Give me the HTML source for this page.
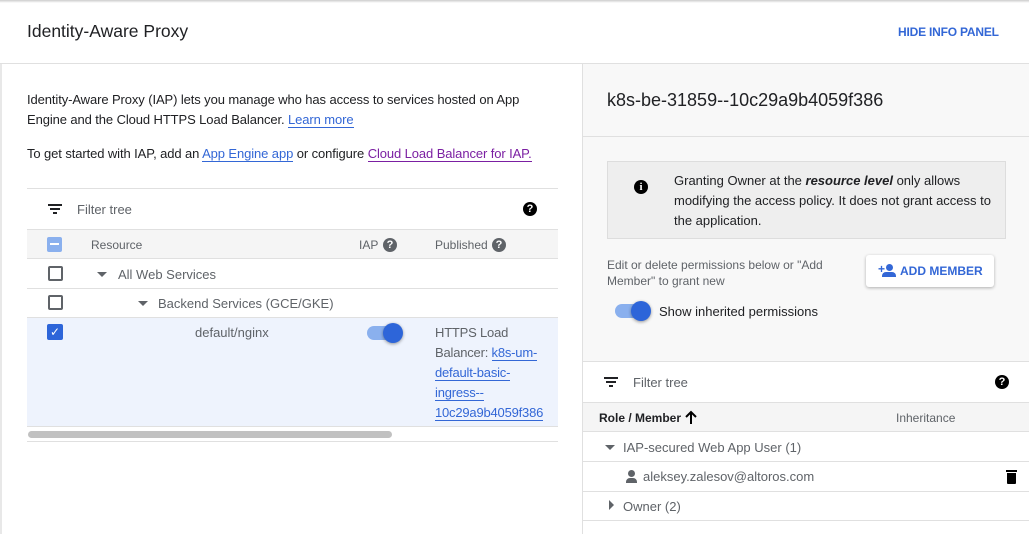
<!DOCTYPE html><html><head><style>
*{box-sizing:border-box;margin:0;padding:0}
body{width:1029px;height:534px;overflow:hidden;font-family:"Liberation Sans",sans-serif;background:#fff;color:#202124;position:relative;font-size:13px}
.a{position:absolute}
a{color:#3367d6;text-decoration:none;border-bottom:1px solid #3367d6}
.line{position:absolute;height:1px;background:#e0e0e0}
.cb{position:absolute;width:15px;height:15px;border:2px solid #5f6368;border-radius:2px}
.tri{position:absolute;width:0;height:0;border-left:5px solid transparent;border-right:5px solid transparent;border-top:5px solid #5f6368}
.q{position:absolute;width:14px;height:14px;border-radius:50%;background:#000;color:#fff;font-size:11px;font-weight:bold;text-align:center;line-height:14px}
.g{color:#5f6368}
</style></head><body>
<div class="a" style="left:0;top:0;width:1029px;height:3px;background:linear-gradient(#ccc,#fff)"></div>
<div class="a" style="left:27px;top:21px;font-size:17.5px">Identity-Aware Proxy</div>
<div class="a" style="left:898px;top:25px;font-size:12px;color:#3367d6;font-weight:bold;letter-spacing:-0.2px">HIDE INFO PANEL</div>
<div class="line" style="left:0;top:63px;width:1029px"></div>
<div class="a" style="left:0;top:64px;width:2px;height:470px;background:#e8e8e8"></div>
<div class="a" style="left:27px;top:90px;line-height:19.5px;width:520px;letter-spacing:-0.1px">Identity-Aware Proxy (IAP) lets you manage who has access to services hosted on App Engine and the Cloud HTTPS Load Balancer. <a>Learn more</a></div>
<div class="a" style="left:27px;top:146px;letter-spacing:-0.1px">To get started with IAP, add an <a>App Engine app</a> or configure <a style="color:#7b1fa2;border-color:#7b1fa2">Cloud Load Balancer for IAP.</a></div>
<div class="line" style="left:27px;top:188px;width:531px"></div>
<div class="a" style="left:48px;top:204px;width:14px;height:2px;background:#202124"></div>
<div class="a" style="left:50px;top:208px;width:10px;height:2px;background:#202124"></div>
<div class="a" style="left:53px;top:212px;width:4px;height:2px;background:#202124"></div>
<div class="a g" style="left:77px;top:202px">Filter tree</div>
<div class="q" style="left:523px;top:202px">?</div>
<div class="a" style="left:27px;top:229px;width:531px;height:30px;background:#f5f5f5;border-top:1px solid #e0e0e0;border-bottom:1px solid #e0e0e0"></div>
<div class="a" style="left:47px;top:237px;width:15px;height:15px;background:#8ab0ee;border-radius:2px"><div style="margin:6px 3px;height:2px;background:#fff"></div></div>
<div class="a g" style="left:91px;top:238px;font-size:12px">Resource</div>
<div class="a g" style="left:359px;top:238px;font-size:12px">IAP</div><div class="q" style="left:383px;top:238px;background:#5f6368">?</div>
<div class="a g" style="left:435px;top:238px;font-size:12px">Published</div><div class="q" style="left:492px;top:238px;background:#5f6368">?</div>
<div class="cb" style="left:48px;top:266px"></div><div class="tri" style="left:97px;top:272px"></div>
<div class="a g" style="left:118px;top:267px">All Web Services</div>
<div class="line" style="left:27px;top:288px;width:531px"></div>
<div class="cb" style="left:48px;top:295px"></div><div class="tri" style="left:138px;top:301px"></div>
<div class="a g" style="left:158px;top:296px">Backend Services (GCE/GKE)</div>
<div class="a" style="left:27px;top:317px;width:531px;height:110px;background:#eef3fd;border-top:1px solid #e0e0e0;border-bottom:1px solid #e0e0e0"></div>
<div class="a" style="left:47px;top:324px;width:16px;height:16px;background:#2d65d9;border-radius:2px;color:#fff;font-size:12px;text-align:center;line-height:16px">✓</div>
<div class="a g" style="left:195px;top:325px">default/nginx</div>
<div class="a" style="left:367px;top:326px;width:34px;height:14px;border-radius:7px;background:#8ab0ee"></div>
<div class="a" style="left:383px;top:323px;width:20px;height:20px;border-radius:50%;background:#2d65d9;box-shadow:0 1px 3px rgba(0,0,0,.4)"></div>
<div class="a g" style="left:435px;top:323px;line-height:20px;width:122px;letter-spacing:-0.2px">HTTPS Load Balancer: <a>k8s-um-</a> <a>default-basic-</a> <a>ingress--</a> <a>10c29a9b4059f386</a></div>
<div class="a" style="left:28px;top:431px;width:364px;height:7px;border-radius:4px;background:#c1c1c1"></div>
<div class="line" style="left:27px;top:441px;width:531px"></div>
<div class="a" style="left:582px;top:64px;width:447px;height:470px;background:#f8f8f8;border-left:1px solid #e0e0e0"></div>
<div class="a" style="left:607px;top:90px;font-size:18px">k8s-be-31859--10c29a9b4059f386</div>
<div class="line" style="left:583px;top:136px;width:446px"></div>
<div class="a" style="left:607px;top:161px;width:399px;height:78px;background:#eee;border:1px solid #ddd"></div>
<div class="q" style="left:634px;top:180px;font-family:'Liberation Serif',serif">i</div>
<div class="a" style="left:674px;top:171px;line-height:20px;width:325px">Granting Owner at the <b><i>resource level</i></b> only allows modifying the access policy. It does not grant access to the application.</div>
<div class="a g" style="left:607px;top:257px;font-size:12px;line-height:16px;width:230px">Edit or delete permissions below or "Add Member" to grant new</div>
<div class="a" style="left:866px;top:255px;width:128px;height:32px;background:#fff;border-radius:3px;box-shadow:0 1px 3px rgba(0,0,0,.3);color:#3367d6;font-weight:bold;font-size:12px;line-height:32px;padding-left:34px">ADD MEMBER</div>
<div class="a" style="left:878px;top:262px;color:#3367d6;font-weight:bold;font-size:12px">+</div>
<div class="a" style="left:886px;top:264px;width:7px;height:7px;border-radius:50%;background:#3367d6"></div>
<div class="a" style="left:882px;top:272px;width:14px;height:5px;border-radius:4px 4px 0 0;background:#3367d6"></div>
<div class="a" style="left:615px;top:304px;width:34px;height:14px;border-radius:7px;background:#8ab0ee"></div>
<div class="a" style="left:631px;top:301px;width:20px;height:20px;border-radius:50%;background:#2d65d9;box-shadow:0 1px 3px rgba(0,0,0,.4)"></div>
<div class="a" style="left:659px;top:304px">Show inherited permissions</div>
<div class="a" style="left:583px;top:361px;width:446px;height:173px;background:#fff;border-top:1px solid #e0e0e0"></div>
<div class="a" style="left:604px;top:377px;width:14px;height:2px;background:#202124"></div>
<div class="a" style="left:606px;top:381px;width:10px;height:2px;background:#202124"></div>
<div class="a" style="left:609px;top:385px;width:4px;height:2px;background:#202124"></div>
<div class="a g" style="left:633px;top:375px">Filter tree</div>
<div class="q" style="left:995px;top:375px">?</div>
<div class="a" style="left:583px;top:402px;width:446px;height:30px;background:#f5f5f5;border-top:1px solid #e0e0e0;border-bottom:1px solid #e0e0e0"></div>
<div class="a" style="left:599px;top:411px;font-size:12px;font-weight:bold">Role / Member</div>
<svg class="a" style="left:684px;top:410px" width="14" height="15" viewBox="0 0 14 15"><path d="M7 14V2M2 7l5-5 5 5" stroke="#000" stroke-width="2" fill="none"/></svg>
<div class="a g" style="left:896px;top:411px;font-size:12px">Inheritance</div>
<div class="tri" style="left:605px;top:445px"></div>
<div class="a g" style="left:623px;top:440px">IAP-secured Web App User (1)</div>
<div class="line" style="left:583px;top:461px;width:446px"></div>
<div class="a" style="left:628px;top:470px;width:7px;height:7px;border-radius:50%;background:#5f6368"></div>
<div class="a" style="left:626px;top:478px;width:11px;height:5px;border-radius:4px 4px 0 0;background:#5f6368"></div>
<div class="a g" style="left:643px;top:469px">aleksey.zalesov@altoros.com</div>
<div class="a" style="left:1006px;top:470px;width:11px;height:2px;background:#000"></div>
<div class="a" style="left:1007px;top:473px;width:9px;height:11px;background:#000;border-radius:0 0 1px 1px"></div>
<div class="line" style="left:583px;top:491px;width:446px"></div>
<div class="a" style="left:609px;top:500px;width:0;height:0;border-top:5px solid transparent;border-bottom:5px solid transparent;border-left:5px solid #5f6368"></div>
<div class="a g" style="left:623px;top:499px">Owner (2)</div>
<div class="line" style="left:583px;top:520px;width:446px"></div>
</body></html>
